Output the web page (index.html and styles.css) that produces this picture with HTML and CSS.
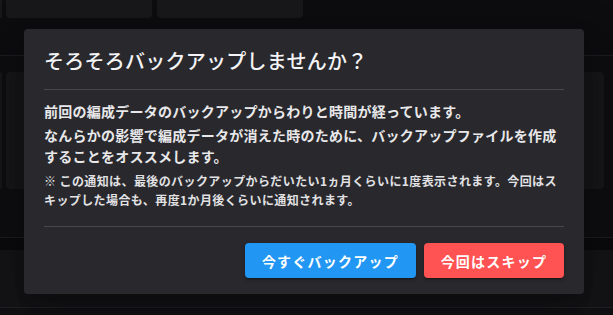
FILE: index.html
```html
<!DOCTYPE html>
<html lang="ja">
<head>
<meta charset="utf-8">
<title>バックアップ</title>
<link rel="stylesheet" href="styles.css">
</head>
<body>
<div class="app">
  <div class="top">
    <div class="tcard sliver"></div>
    <div class="tcard"></div>
    <div class="tcard"></div>
  </div>
  <div class="mid">
    <div class="mcard sliver"></div>
    <div class="mcard wide"></div>
  </div>
  <div class="band"></div>
  <div class="lower"></div>
  <div class="bottom"></div>

  <div class="dialog">
    <div class="dialog-title">そろそろバックアップしませんか？</div>
    <div class="divider"></div>
    <div class="dialog-text">
      <p class="para first">前回の編成データのバックアップからわりと時間が経っています。</p>
      <p class="para">なんらかの影響で編成データが消えた時のために、バックアップファイルを作成することをオススメします。</p>
      <p class="note">※ この通知は、最後のバックアップからだいたい1ヵ月くらいに1度表示されます。今回はスキップした場合も、再度1か月後くらいに通知されます。</p>
    </div>
    <div class="divider"></div>
    <div class="dialog-actions">
      <button class="btn btn-blue">今すぐバックアップ</button>
      <button class="btn btn-red">今回はスキップ</button>
    </div>
  </div>
</div>
</body>
</html>
```
FILE: styles.css
```css
* { box-sizing: border-box; }
html, body { margin: 0; padding: 0; }
body {
  width: 613px;
  height: 315px;
  overflow: hidden;
  background: #0f0f12;
  font-family: "Noto Sans CJK JP", "Noto Sans", sans-serif;
}
.app {
  position: relative;
  width: 613px;
  height: 315px;
  display: flex;
  flex-direction: column;
  overflow: hidden;
}
.top {
  height: 56px;
  flex: none;
  background: #0d0d10;
  border-bottom: 1px solid #1c1c20;
  display: flex;
  align-items: flex-start;
  gap: 5px;
}
.tcard {
  width: 146px;
  height: 18px;
  background: #18181b;
  border-radius: 0 0 4px 4px;
}
.tcard.sliver { width: 2px; margin-right: -1px; }
.mid {
  height: 182px;
  flex: none;
  background: #0e0e11;
  border-bottom: 1px solid #1c1c20;
  padding: 16px 9px 0 0;
  display: flex;
  align-items: flex-start;
  gap: 4px;
}
.mcard {
  height: 117px;
  background: #161619;
  border-radius: 4px;
}
.mcard.sliver { width: 2px; border-radius: 0 3px 3px 0; }
.mcard.wide { flex: 1; }
.band {
  height: 12px;
  flex: none;
  background: #0b0b0e;
}
.lower {
  height: 58px;
  flex: none;
  background: #141417;
  border-bottom: 1px solid #202024;
}
.bottom {
  flex: 1;
  background: #111114;
}

.dialog {
  position: absolute;
  left: 24px;
  top: 29px;
  width: 560px;
  height: 265px;
  background: #28282d;
  border-radius: 4px;
  box-shadow: 0 11px 15px -7px rgba(0,0,0,.2), 0 24px 38px 3px rgba(0,0,0,.14), 0 9px 46px 8px rgba(0,0,0,.12);
  padding: 0 20px;
  display: flex;
  flex-direction: column;
  color: #ececee;
}
.dialog-title {
  padding: 16px 0 12px;
  font-size: 20px;
  line-height: 32px;
  font-weight: 500;
  letter-spacing: 0.25px;
  color: #f4f4f6;
  white-space: nowrap;
}
.divider {
  height: 1px;
  background: #47474c;
  flex: none;
}
.dialog-text {
  padding: 11px 0 17px;
}
.para {
  margin: 0;
  font-size: 14px;
  line-height: 21px;
  font-weight: 700;
  letter-spacing: 0.25px;
  color: #e8e8ea;
}
.para.first { margin-bottom: 3px; }
.note {
  margin: 4px 0 0;
  font-size: 12px;
  line-height: 19px;
  font-weight: 700;
  letter-spacing: 0.4px;
  color: #e2e2e4;
}
.dialog-actions {
  padding: 16px 0 16px;
  display: flex;
  justify-content: flex-end;
  gap: 8px;
}
.btn {
  height: 35px;
  padding: 0 16px;
  border: none;
  border-radius: 4px;
  font-family: "Noto Sans CJK JP", "Noto Sans", sans-serif;
  font-size: 14px;
  font-weight: 700;
  letter-spacing: 1.25px;
  color: #ffffff;
  box-shadow: 0 3px 1px -2px rgba(0,0,0,.2), 0 2px 2px 0 rgba(0,0,0,.14), 0 1px 5px 0 rgba(0,0,0,.12);
  cursor: pointer;
}
.btn-blue { background: #2196f3; width: 171px; }
.btn-red { background: #ff5252; width: 140px; }
```
